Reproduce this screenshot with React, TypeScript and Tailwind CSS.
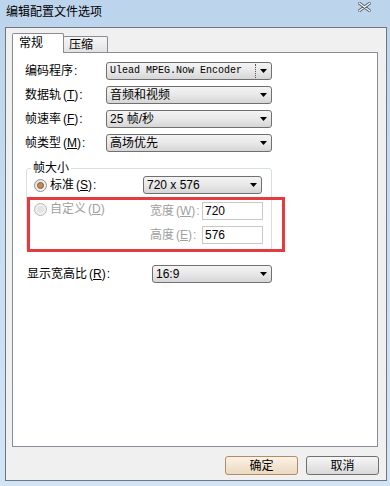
import React from "react";

const CJK = "font-['SimSun','Liberation_Sans','Noto_Sans_CJK_SC',sans-serif]";

const Arrow = () => (
    <svg width="7" height="4" viewBox="0 0 7 4" className="shrink-0">
        <path d="M0 0 H7 L3.5 4 Z" fill="#000" />
    </svg>
);

const Combo = ({ children, className = "", focus = false }: { children: React.ReactNode; className?: string; focus?: boolean }) => (
    <div className={`h-[18px] flex items-center border border-[#707070] rounded-[3px] bg-gradient-to-b from-[#f4f4f4] via-[#e8e8e8] to-[#d6d6d6] pr-[4px] ${className}`}>
        <div className={`flex-1 h-[14px] ml-[1px] mr-[4px] flex items-center pl-[2px] overflow-hidden whitespace-nowrap ${focus ? "border-r border-dotted border-[#555]" : ""}`}>
            {children}
        </div>
        <Arrow />
    </div>
);

const Radio = ({ checked = false, disabled = false }: { checked?: boolean; disabled?: boolean }) => (
    <span className={`w-[13px] h-[13px] rounded-full border flex items-center justify-center shrink-0 ${disabled ? "border-[#b8b8b8] bg-[#f0f0f0]" : "border-[#8f8f8f] bg-gradient-to-br from-[#e0e0e0] to-[#fafafa]"}`}>
        {checked && <span className="w-[7px] h-[7px] rounded-full bg-[#c08a5a] border border-[#8a5a33]" />}
        {!checked && <span className={`w-[7px] h-[7px] rounded-full ${disabled ? "bg-[#e4e4e4]" : "bg-[#e8e8e8]"}`} />}
    </span>
);

const Label = ({ text, mn, colon = true, className = "" }: { text: string; mn?: string; colon?: boolean; className?: string }) => (
    <span className={`whitespace-nowrap ${className}`}>
        {text}
        {mn && <span className="ml-[2px]">(<span className="underline">{mn}</span>)</span>}
        {colon && <span className="ml-[1px]">:</span>}
    </span>
);

const Row = ({ label, children }: { label: React.ReactNode; children: React.ReactNode }) => (
    <div className="flex items-center h-[18px]">
        <div className="w-[81px] ml-[12px]">{label}</div>
        {children}
    </div>
);

const App = () => {
    return (
        <div className={`w-[390px] h-[486px] bg-gradient-to-b from-[#bcd4ec] via-[#c9ddf1] to-[#d3e4f5] text-[12px] leading-[16px] text-black ${CJK} overflow-hidden`}>
            {/* title bar */}
            <div className="h-[27px] flex items-start justify-between pl-[6px] pr-[19px]">
                <span className="mt-[4px] text-[12px]">编辑配置文件选项</span>
                <svg width="13" height="10" viewBox="0 0 13 10" className="mt-[2px]">
                    <path d="M1 1 L12 9 M12 1 L1 9" stroke="#505a66" strokeWidth="3" strokeLinecap="round" />
                    <path d="M1 1 L12 9 M12 1 L1 9" stroke="#f4f8fc" strokeWidth="1.4" strokeLinecap="round" />
                </svg>
            </div>

            {/* dialog body */}
            <div className="ml-[5px] w-[382px] h-[454px] border border-[#6e7781] bg-[#f0f0f0]">
                <div className="pl-[6px] pt-[5px]">
                    {/* tabs */}
                    <div className="flex items-end h-[19px]">
                        <div className="relative z-10 w-[52px] h-[20px] -mb-[1px] bg-white border border-b-0 border-[#898c95] rounded-t-[2px] pl-[6px] pt-[1px]">
                            常规
                        </div>
                        <div className="w-[45px] h-[16px] -ml-[1px] border border-b-0 border-[#898c95] rounded-t-[2px] bg-gradient-to-b from-[#f6f6f6] to-[#e3e3e3] pl-[5px] leading-[16px]">
                            压缩
                        </div>
                    </div>

                    {/* panel */}
                    <div className="relative w-[366px] h-[395px] bg-white border border-[#898c95]">
                        <div className="pt-[9px] flex flex-col gap-[6px]">
                            <Row label={<Label text="编码程序" />}>
                                <Combo className="w-[166px]" focus>
                                    <span className="font-['Liberation_Mono',monospace] text-[10px]">Ulead MPEG.Now Encoder</span>
                                </Combo>
                            </Row>
                            <Row label={<Label text="数据轨" mn="T" />}>
                                <Combo className="w-[166px]">音频和视频</Combo>
                            </Row>
                            <Row label={<Label text="帧速率" mn="F" />}>
                                <Combo className="w-[166px]">25 帧/秒</Combo>
                            </Row>
                            <Row label={<Label text="帧类型" mn="M" />}>
                                <Combo className="w-[166px]">高场优先</Combo>
                            </Row>
                        </div>

                        {/* frame size group */}
                        <fieldset className="mt-[8px] ml-[13px] w-[246px] border border-[#d5dfe5] rounded-[3px] pl-[4px] pb-[6px]">
                            <legend className="px-[2px] leading-[16px]">帧大小</legend>
                            <div className="flex items-center h-[18px]">
                                <span className="ml-[3px]"><Radio checked /></span>
                                <Label text="标准" mn="S" className="ml-[3px]" />
                                <Combo className="w-[119px] ml-auto mr-[9px]">
                                    <span className="font-['Liberation_Sans',sans-serif]">720 x 576</span>
                                </Combo>
                            </div>
                            <div className="flex mt-[6px]">
                                <div className="flex items-center h-[18px] text-[#a0a0a0]">
                                    <span className="ml-[3px]"><Radio disabled /></span>
                                    <Label text="自定义" mn="D" colon={false} className="ml-[3px]" />
                                </div>
                                <div className="ml-auto mr-[8px] pt-[2px] flex flex-col gap-[6px]">
                                    <div className="flex items-center h-[18px]">
                                        <Label text="宽度" mn="W" className="text-[#a0a0a0] w-[52px]" />
                                        <div className="w-[61px] h-[18px] border border-[#c9c9c9] bg-white pl-[2px] font-['Liberation_Sans',sans-serif] leading-[16px]">720</div>
                                    </div>
                                    <div className="flex items-center h-[18px]">
                                        <Label text="高度" mn="E" className="text-[#a0a0a0] w-[52px]" />
                                        <div className="w-[61px] h-[18px] border border-[#c9c9c9] bg-white pl-[2px] font-['Liberation_Sans',sans-serif] leading-[16px]">576</div>
                                    </div>
                                </div>
                            </div>
                        </fieldset>

                        {/* aspect ratio */}
                        <div className="flex items-center h-[18px] mt-[14px]">
                            <Label text="显示宽高比" mn="R" className="ml-[14px] w-[125px]" />
                            <Combo className="w-[120px]">
                                <span className="font-['Liberation_Sans',sans-serif]">16:9</span>
                            </Combo>
                        </div>

                        {/* annotation */}
                        <div className="absolute left-[14px] top-[144px] w-[258px] h-[55px] border-[3px] border-[#e53a40]" />
                    </div>

                    {/* buttons */}
                    <div className="flex justify-end gap-[8px] mt-[9px] pr-[7px]">
                        <button className="w-[73px] h-[19px] rounded-[3px] border border-[#b08d63] bg-gradient-to-b from-[#fbf2e6] to-[#ecd9bf] leading-[16px]">确定</button>
                        <button className="w-[73px] h-[19px] rounded-[3px] border border-[#707070] bg-gradient-to-b from-[#f6f6f6] to-[#d9d9d9] leading-[16px]">取消</button>
                    </div>
                </div>
            </div>
        </div>
    );
};

export default App;
